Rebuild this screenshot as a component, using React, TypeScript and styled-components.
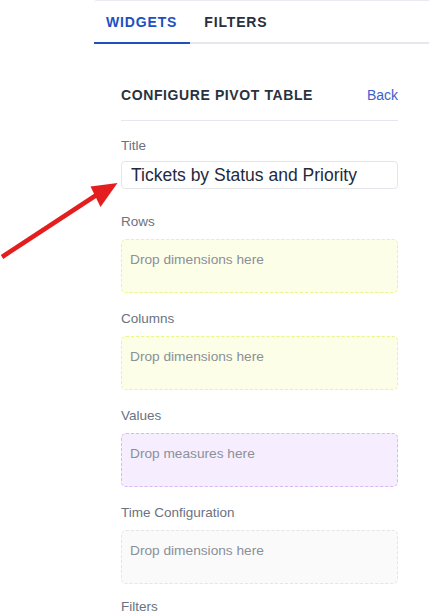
import React, { FC } from 'react';
import styled, { createGlobalStyle } from 'styled-components';

const GlobalStyle = createGlobalStyle`
  html, body {
    margin: 0;
    padding: 0;
    background: #ffffff;
  }
  body {
    font-family: "Liberation Sans", Arial, sans-serif;
  }
`;

type Tone = 'yellow' | 'purple' | 'gray';

const tones: Record<Tone, { bg: string; border: string }> = {
  yellow: { bg: '#fcfee7', border: '#eaf68c' },
  purple: { bg: '#f6eefe', border: '#d9b6fb' },
  gray: { bg: '#fafafa', border: '#e4e5e8' },
};

const Page = styled.div`
  position: relative;
  display: flex;
  width: 429px;
  height: 612px;
  overflow: hidden;
  background: #ffffff;
`;

const Gutter = styled.div`
  width: 94px;
  flex-shrink: 0;
`;

const Panel = styled.div`
  flex: 1;
  display: flex;
  flex-direction: column;
  border-top: 1px solid #e8eaef;
  border-top-left-radius: 3px;
`;

const TabBar = styled.div`
  display: flex;
  gap: 2px;
  border-bottom: 2px solid #e6e8ed;
`;

const Tab = styled.div<{ $active?: boolean }>`
  height: 41px;
  display: flex;
  align-items: center;
  padding: 0 13px 0 12px;
  margin-bottom: -2px;
  border-bottom: 2px solid ${p => (p.$active ? '#2050c0' : 'transparent')};
  font-size: 14px;
  font-weight: 700;
  letter-spacing: 0.85px;
  color: ${p => (p.$active ? '#2050c0' : '#27303d')};
`;

const Body = styled.div`
  padding: 0 31px 0 27px;
  display: flex;
  flex-direction: column;
`;

const Header = styled.div`
  margin-top: 41px;
  padding-bottom: 15px;
  border-bottom: 1px solid #e6e7ee;
  display: flex;
  justify-content: space-between;
  align-items: center;
  line-height: 20px;
`;

const Heading = styled.div`
  font-size: 14px;
  font-weight: 700;
  letter-spacing: 0.6px;
  color: #283241;
`;

const BackLink = styled.a`
  font-size: 14px;
  color: #3a5fcd;
  text-decoration: none;
  cursor: pointer;
`;

const Label = styled.div<{ $top: number; $gap: number }>`
  margin-top: ${p => p.$top}px;
  margin-bottom: ${p => p.$gap}px;
  font-size: 13.5px;
  line-height: 18px;
  color: #6b7280;
`;

const TitleInput = styled.div`
  height: 26px;
  border: 1px solid #e3e5ea;
  border-radius: 4px;
  padding: 0 9px;
  display: flex;
  align-items: center;
  font-size: 17.5px;
  color: #1f2a3e;
  white-space: nowrap;
`;

const DropZone = styled.div<{ $tone: Tone }>`
  border: 1px dashed ${p => tones[p.$tone].border};
  background: ${p => tones[p.$tone].bg};
  border-radius: 5px;
  padding: 10px 8px 0;
  box-sizing: border-box;
  height: 54px;
  font-size: 13.7px;
  line-height: 20px;
  color: #8a9099;
`;

const ArrowOverlay = styled.svg`
  position: absolute;
  left: 0;
  top: 0;
  pointer-events: none;
`;

const Arrow: FC = () => (
  <ArrowOverlay width="130" height="270" viewBox="0 0 130 270">
    <line x1="2" y1="257" x2="98" y2="194" stroke="#e41e1e" strokeWidth="4.5" strokeLinecap="butt" />
    <polygon points="117.5,183 90.5,186.5 100.5,207" fill="#e41e1e" />
  </ArrowOverlay>
);

const zones: { label: string; text: string; tone: Tone }[] = [
  { label: 'Rows', text: 'Drop dimensions here', tone: 'yellow' },
  { label: 'Columns', text: 'Drop dimensions here', tone: 'yellow' },
  { label: 'Values', text: 'Drop measures here', tone: 'purple' },
  { label: 'Time Configuration', text: 'Drop dimensions here', tone: 'gray' },
];

const App: FC = () => {
  return (
    <Page>
      <GlobalStyle />
      <Gutter />
      <Panel>
        <TabBar>
          <Tab $active>WIDGETS</Tab>
          <Tab>FILTERS</Tab>
        </TabBar>
        <Body>
          <Header>
            <Heading>CONFIGURE PIVOT TABLE</Heading>
            <BackLink>Back</BackLink>
          </Header>
          <Label $top={16} $gap={6}>Title</Label>
          <TitleInput>Tickets by Status and Priority</TitleInput>
          {zones.map((z, i) => (
            <React.Fragment key={z.label}>
              <Label $top={i === 0 ? 24 : 17} $gap={8}>{z.label}</Label>
              <DropZone $tone={z.tone}>{z.text}</DropZone>
            </React.Fragment>
          ))}
          <Label $top={14} $gap={8}>Filters</Label>
        </Body>
      </Panel>
      <Arrow />
    </Page>
  );
};

export default App;
